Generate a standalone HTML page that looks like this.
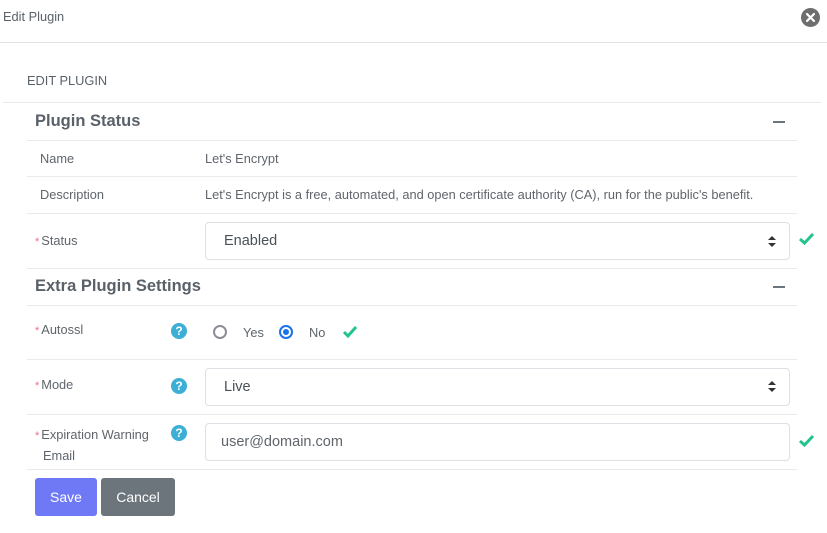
<!DOCTYPE html>
<html><head><style>
*{box-sizing:border-box;margin:0;padding:0}
body{width:827px;height:533px;background:#fff;font-family:"Liberation Sans",sans-serif;color:#5a6169;position:relative;overflow:hidden}
.a{position:absolute;white-space:nowrap}
.hl{position:absolute;height:1px;background:#e9ecef}
.sm{font-size:12.8px;color:#5f656c}
.h{font-size:16.5px;font-weight:bold;color:#5a6169}
.req{color:#f06a8a;font-size:11px;margin-right:2px}
.box{position:absolute;border:1px solid #dcdfe3;border-radius:4px;background:#fff;font-size:14.5px;color:#495057;padding-left:18px;display:flex;align-items:center}
.q{position:absolute;width:16px;height:16px;border-radius:50%;background:#3bafd5;color:#fff;font-size:12px;font-weight:bold;text-align:center;line-height:16px}
.dash{position:absolute;width:12px;height:2px;background:#6c757d}
</style></head><body>
<div class="a" style="left:3px;top:9px;font-size:12.8px;color:#5a6169">Edit Plugin</div>
<svg class="a" style="left:801px;top:8px" width="19" height="19" viewBox="0 0 19 19"><circle cx="9.5" cy="9.5" r="9.5" fill="#6e6e6e"/><path d="M6 6L13 13M13 6L6 13" stroke="#fff" stroke-width="2.2" stroke-linecap="round"/></svg>
<div class="hl" style="left:0;top:42px;width:827px;background:#e3e3e3"></div>
<div class="a" style="left:27px;top:73px;font-size:12.8px;color:#5a6169">EDIT PLUGIN</div>
<div class="hl" style="left:3px;top:102px;width:818px"></div>

<div class="a h" style="left:35px;top:112px">Plugin Status</div>
<div class="dash" style="left:773px;top:121px"></div>
<div class="hl" style="left:27px;top:140px;width:770px"></div>
<div class="a sm" style="left:40px;top:151px">Name</div>
<div class="a sm" style="left:205px;top:151px">Let's Encrypt</div>
<div class="hl" style="left:27px;top:176px;width:770px"></div>
<div class="a sm" style="left:40px;top:187px">Description</div>
<div class="a sm" style="left:205px;top:187px">Let's Encrypt is a free, automated, and open certificate authority (CA), run for the public's benefit.</div>
<div class="hl" style="left:27px;top:213px;width:770px"></div>
<div class="a sm" style="left:35px;top:233px"><span class="req">*</span>Status</div>
<div class="box" style="left:205px;top:222px;width:585px;height:38px">Enabled</div>
<svg class="a" style="left:768px;top:236px" width="8" height="11" viewBox="0 0 8 11"><path d="M4 0L8 4H0Z M4 11L8 7H0Z" fill="#333"/></svg>
<svg class="a" style="left:798px;top:232px" width="17" height="14" viewBox="0 0 17 14"><path d="M2 7L6.5 11L15 2" stroke="#22c38e" stroke-width="3" fill="none"/></svg>
<div class="hl" style="left:27px;top:268px;width:770px"></div>

<div class="a h" style="left:35px;top:277px">Extra Plugin Settings</div>
<div class="dash" style="left:773px;top:286px"></div>
<div class="hl" style="left:27px;top:305px;width:770px"></div>

<div class="a sm" style="left:35px;top:322px"><span class="req">*</span>Autossl</div>
<div class="q" style="left:171px;top:323px">?</div>
<div class="a" style="left:213px;top:325px;width:14px;height:14px;border:2px solid #8c8e96;border-radius:50%"></div>
<div class="a sm" style="left:243px;top:325px">Yes</div>
<div class="a" style="left:279px;top:325px;width:14px;height:14px;border:2px solid #1a73e8;border-radius:50%"><div style="width:6px;height:6px;background:#1a73e8;border-radius:50%;margin:2px"></div></div>
<div class="a sm" style="left:309px;top:325px">No</div>
<svg class="a" style="left:342px;top:325px" width="16" height="14" viewBox="0 0 16 14"><path d="M2 7L6 11L14 2" stroke="#22c38e" stroke-width="3" fill="none"/></svg>
<div class="hl" style="left:27px;top:359px;width:770px"></div>

<div class="a sm" style="left:35px;top:377px"><span class="req">*</span>Mode</div>
<div class="q" style="left:171px;top:378px">?</div>
<div class="box" style="left:205px;top:368px;width:585px;height:38px">Live</div>
<svg class="a" style="left:768px;top:381px" width="8" height="11" viewBox="0 0 8 11"><path d="M4 0L8 4H0Z M4 11L8 7H0Z" fill="#333"/></svg>
<div class="hl" style="left:27px;top:414px;width:770px"></div>

<div class="a sm" style="left:35px;top:425px;line-height:19px"><span class="req">*</span>Expiration Warning<br><span style="padding-left:8px">Email</span></div>
<div class="q" style="left:171px;top:425px">?</div>
<div class="box" style="left:205px;top:423px;width:585px;height:38px;padding-left:15px;color:#5f656c">user@domain.com</div>
<svg class="a" style="left:798px;top:434px" width="17" height="14" viewBox="0 0 17 14"><path d="M2 7L6.5 11L15 2" stroke="#22c38e" stroke-width="3" fill="none"/></svg>
<div class="hl" style="left:27px;top:469px;width:770px"></div>

<div class="a" style="left:35px;top:478px;width:62px;height:38px;background:#7079f5;border-radius:3px;color:#fff;font-size:14px;text-align:center;line-height:38px">Save</div>
<div class="a" style="left:101px;top:478px;width:74px;height:38px;background:#6c747c;border-radius:3px;color:#fff;font-size:14px;text-align:center;line-height:38px">Cancel</div>
</body></html>
